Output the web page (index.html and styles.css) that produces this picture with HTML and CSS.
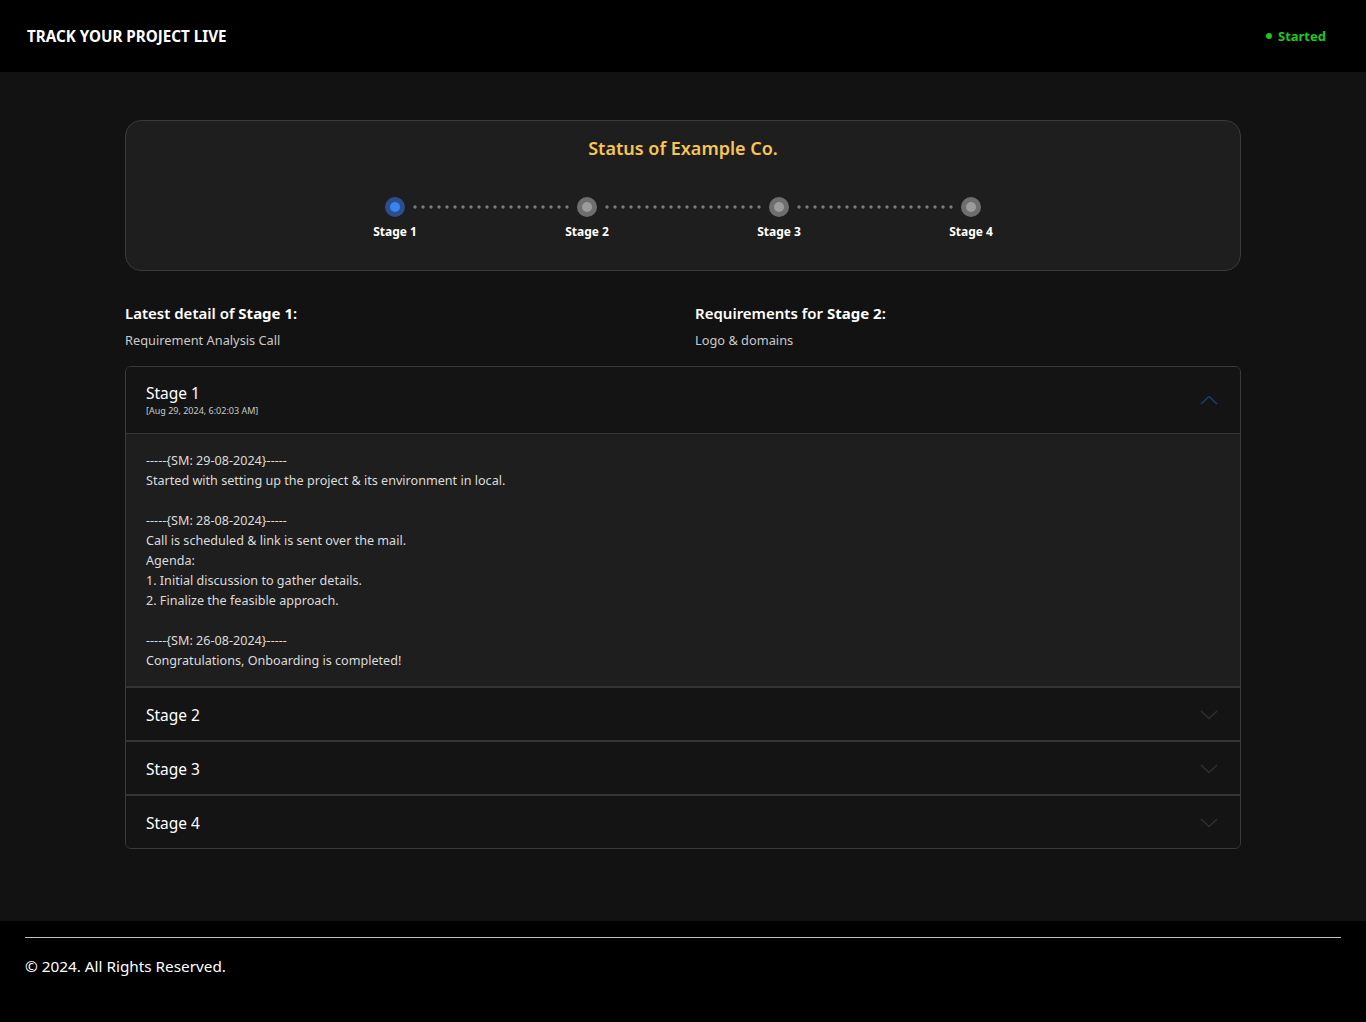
FILE: index.html
```html
<!DOCTYPE html>
<html lang="en">
<head>
<meta charset="utf-8">
<title>Track your project live</title>
<link rel="stylesheet" href="styles.css">
</head>
<body>
<header class="topbar">
  <div class="brand">TRACK YOUR PROJECT LIVE</div>
  <div class="status"><span class="status-dot"></span>Started</div>
</header>
<main class="main">
  <section class="card">
    <h1 class="card-title">Status of Example Co.</h1>
    <div class="stepper">
      <div class="step active"><span class="node"><span class="node-core"></span></span><span class="step-label">Stage 1</span></div>
      <div class="step"><span class="node"><span class="node-core"></span></span><span class="step-label">Stage 2</span></div>
      <div class="step"><span class="node"><span class="node-core"></span></span><span class="step-label">Stage 3</span></div>
      <div class="step last"><span class="node"><span class="node-core"></span></span><span class="step-label">Stage 4</span></div>
    </div>
  </section>

  <section class="details">
    <div class="detail">
      <h2 class="detail-title">Latest detail of <b>Stage 1</b>:</h2>
      <p class="detail-text">Requirement Analysis Call</p>
    </div>
    <div class="detail">
      <h2 class="detail-title">Requirements for <b>Stage 2</b>:</h2>
      <p class="detail-text">Logo &amp; domains</p>
    </div>
  </section>

  <section class="accordion">
    <div class="acc-item open">
      <div class="acc-head tall">
        <div class="acc-heading">
          <div class="acc-name">Stage 1</div>
          <div class="acc-date">[Aug 29, 2024, 6:02:03 AM]</div>
        </div>
        <svg class="chev up" width="18" height="10" viewBox="0 0 18 10"><path d="M1 9 L9 1.5 L17 9" fill="none" stroke="currentColor" stroke-width="1.6"/></svg>
      </div>
      <div class="acc-body">
        <p>-----{SM: 29-08-2024}-----</p>
        <p>Started with setting up the project &amp; its environment in local.</p>
        <p class="blank">&nbsp;</p>
        <p>-----{SM: 28-08-2024}-----</p>
        <p>Call is scheduled &amp; link is sent over the mail.</p>
        <p>Agenda:</p>
        <p>1. Initial discussion to gather details.</p>
        <p>2. Finalize the feasible approach.</p>
        <p class="blank">&nbsp;</p>
        <p>-----{SM: 26-08-2024}-----</p>
        <p>Congratulations, Onboarding is completed!</p>
      </div>
    </div>
    <div class="acc-item">
      <div class="acc-head">
        <div class="acc-name">Stage 2</div>
        <svg class="chev" width="18" height="10" viewBox="0 0 18 10"><path d="M1 1 L9 8.5 L17 1" fill="none" stroke="currentColor" stroke-width="1.6"/></svg>
      </div>
    </div>
    <div class="acc-item">
      <div class="acc-head">
        <div class="acc-name">Stage 3</div>
        <svg class="chev" width="18" height="10" viewBox="0 0 18 10"><path d="M1 1 L9 8.5 L17 1" fill="none" stroke="currentColor" stroke-width="1.6"/></svg>
      </div>
    </div>
    <div class="acc-item">
      <div class="acc-head">
        <div class="acc-name">Stage 4</div>
        <svg class="chev" width="18" height="10" viewBox="0 0 18 10"><path d="M1 1 L9 8.5 L17 1" fill="none" stroke="currentColor" stroke-width="1.6"/></svg>
      </div>
    </div>
  </section>
</main>
<footer class="footer">
  <hr class="footer-rule">
  <p class="copy">© 2024. All Rights Reserved.</p>
</footer>
</body>
</html>
```

FILE: styles.css
```css
* { box-sizing: border-box; }
html, body { margin: 0; padding: 0; }
body {
  font-family: "Noto Sans", "Open Sans", sans-serif;
  background: #121212;
  color: #fff;
}

.topbar {
  height: 72px;
  background: #000;
  display: flex;
  align-items: center;
  justify-content: space-between;
  padding: 0 40px 0 27px;
}
.brand {
  font-size: 15.2px;
  font-weight: 700;
  color: #fff;
}
.status {
  display: flex;
  align-items: center;
  gap: 6px;
  font-size: 13px;
  font-weight: 700;
  color: #1ec81e;
}
.status-dot {
  width: 6px;
  height: 6px;
  border-radius: 50%;
  background: #1ec81e;
}

.main {
  background: #121212;
  padding: 48px 125px 72px;
}

.card {
  background: #1e1e1e;
  border: 1px solid #3a3a3a;
  border-radius: 16px;
  height: 151px;
  padding: 15px 0 0;
}
.card-title {
  margin: 0;
  text-align: center;
  font-size: 18px;
  line-height: 24px;
  font-weight: 600;
  color: #f6c555;
}
.stepper {
  display: flex;
  justify-content: center;
  margin-top: 37px;
}
.step {
  position: relative;
  width: 192px;
  display: flex;
  flex-direction: column;
  align-items: center;
  gap: 7px;
}
.step:not(.last)::after {
  content: "";
  position: absolute;
  left: 112px;
  width: 162px;
  top: 8px;
  height: 4px;
  background-image: radial-gradient(circle, #7a7a7a 1.4px, transparent 1.8px);
  background-size: 8px 4px;
  background-repeat: repeat-x;
}
.node {
  width: 20px;
  height: 20px;
  border-radius: 50%;
  background: #6e6e6e;
  display: flex;
  align-items: center;
  justify-content: center;
}
.node-core {
  width: 10px;
  height: 10px;
  border-radius: 50%;
  background: #9c9c9c;
}
.step.active .node { background: #2c4f8c; }
.step.active .node-core { background: #3b82f6; }
.step-label {
  font-size: 12px;
  line-height: 16px;
  font-weight: 700;
  color: #fff;
}

.details {
  display: grid;
  grid-template-columns: 1fr 1fr;
  gap: 24px;
  margin-top: 31px;
}
.detail-title {
  margin: 0;
  font-size: 15px;
  line-height: 22px;
  font-weight: 600;
  color: #fff;
}
.detail-title b { font-weight: 700; }
.detail-text {
  margin: 6px 0 0;
  font-size: 12.8px;
  line-height: 20px;
  color: #c9c9c9;
}

.accordion {
  margin-top: 16px;
  border: 1px solid #3a3a3a;
  border-radius: 6px;
  overflow: hidden;
  background: #141414;
}
.acc-item + .acc-item { border-top: 2px solid #343434; }
.acc-head {
  height: 52px;
  display: flex;
  align-items: center;
  justify-content: space-between;
  padding: 2px 22px 0 20px;
  background: #141414;
}
.acc-head.tall {
  height: 67px;
  padding-top: 0;
  border-bottom: 1px solid #343434;
}
.acc-name {
  font-size: 15.5px;
  line-height: 22px;
  color: #fff;
}
.acc-date {
  font-size: 9px;
  line-height: 14px;
  color: #c9c9c9;
}
.chev { color: #2f2f2f; }
.chev.up { color: #1d3c6e; }
.acc-body {
  background: #1e1e1e;
  padding: 17px 20px 15px;
}
.acc-body p {
  margin: 0;
  font-size: 12.6px;
  line-height: 20px;
  color: #dcdcdc;
}

.footer {
  background: #000;
  height: 101px;
  padding: 16px 25px 0;
}
.footer-rule {
  margin: 0;
  border: 0;
  border-top: 1px solid #c0c0c0;
}
.copy {
  margin: 17px 0 0;
  font-size: 15.3px;
  line-height: 22px;
  color: #fff;
}
```
